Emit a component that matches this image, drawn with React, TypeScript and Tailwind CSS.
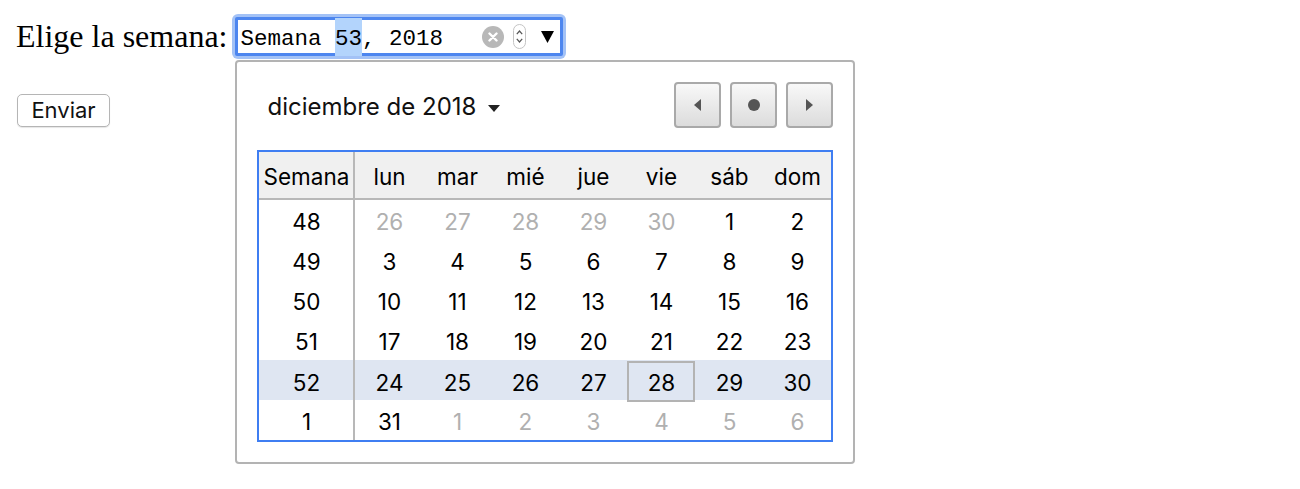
import React from 'react';

type Day = { n: number; muted?: boolean };

const weekDays = ['lun', 'mar', 'mié', 'jue', 'vie', 'sáb', 'dom'];

const rows: { week: number; days: Day[] }[] = [
  { week: 48, days: [26, 27, 28, 29, 30].map((n) => ({ n, muted: true })).concat([{ n: 1 }, { n: 2 }]) },
  { week: 49, days: [3, 4, 5, 6, 7, 8, 9].map((n) => ({ n })) },
  { week: 50, days: [10, 11, 12, 13, 14, 15, 16].map((n) => ({ n })) },
  { week: 51, days: [17, 18, 19, 20, 21, 22, 23].map((n) => ({ n })) },
  { week: 52, days: [24, 25, 26, 27, 28, 29, 30].map((n) => ({ n })) },
  { week: 1, days: [{ n: 31 }].concat([1, 2, 3, 4, 5, 6].map((n) => ({ n, muted: true }))) },
];

const sans = "font-['Inter','Liberation_Sans',sans-serif]";

const NavButton: React.FC<{ children: React.ReactNode }> = ({ children }) => (
  <button className="w-[47px] h-[46px] rounded-[4px] border-2 border-[#a9a9a9] bg-gradient-to-b from-[#f8f8f8] to-[#dcdcdc] flex items-center justify-center">
    {children}
  </button>
);

const WeekPicker: React.FC = () => {
  return (
    <div className={`absolute left-[3px] top-[46px] w-[620px] h-[404px] bg-white border-2 border-[#b3b3b3] rounded-[4px] p-[20px] ${sans}`}>
      {/* Month header */}
      <div className="flex items-center justify-between h-[46px]">
        <div className="flex items-center pl-[10px] pt-[4px] text-[24px] text-[#111]">
          <span>diciembre de 2018</span>
          <svg className="ml-[12px] mt-[2px]" width="12" height="7" viewBox="0 0 12 7">
            <path d="M0 0 L12 0 L6 7 Z" fill="#222" />
          </svg>
        </div>
        <div className="flex gap-[9px]">
          <NavButton>
            <svg width="7" height="12" viewBox="0 0 7 12">
              <path d="M7 0 L7 12 L0 6 Z" fill="#555" />
            </svg>
          </NavButton>
          <NavButton>
            <span className="block w-[12px] h-[12px] rounded-full bg-[#555]" />
          </NavButton>
          <NavButton>
            <svg width="7" height="12" viewBox="0 0 7 12">
              <path d="M0 0 L0 12 L7 6 Z" fill="#555" />
            </svg>
          </NavButton>
        </div>
      </div>

      {/* Calendar grid */}
      <div className="mt-[22px] w-[576px] h-[292px] border-2 border-[#3f7ef2] text-[22.5px]">
        <div className="grid grid-cols-[96px_repeat(7,1fr)] h-[48px] bg-[#f0f0f0] border-b-2 border-[#b8b8b8]">
          <div className="flex items-center justify-center pt-[3px] border-r-2 border-[#b8b8b8]">Semana</div>
          {weekDays.map((d) => (
            <div key={d} className="flex items-center justify-center pt-[3px]">
              {d}
            </div>
          ))}
        </div>
        {rows.map((row) => {
          const current = row.week === 52;
          return (
            <div
              key={row.week}
              className={`grid grid-cols-[96px_repeat(7,1fr)] h-[40px] ${current ? 'bg-[#dfe6f2]' : ''}`}
            >
              <div className="flex items-center justify-center pt-[3px] border-r-2 border-[#b8b8b8] text-black">{row.week}</div>
              {row.days.map((d, i) => {
                const selected = current && d.n === 28;
                return (
                  <div
                    key={i}
                    className={`flex items-center justify-center pt-[3px] ${d.muted ? 'text-[#b0b0b0]' : 'text-black'} ${selected ? 'border-2 border-[#b3b3b3] mt-[1px]' : ''}`}
                  >
                    {d.n}
                  </div>
                );
              })}
            </div>
          );
        })}
      </div>
    </div>
  );
};

export default function App() {
  return (
    <div className="bg-white w-[1300px] h-[489px] pl-[16px] pt-[14px] font-['Liberation_Serif',serif] text-black">
      <div className="flex items-center">
        <label className="text-[32px] leading-[45px] mr-[5px]">Elige la semana:</label>
        <div className="relative">
          <div className="w-[334px] h-[45px] rounded-[6px] bg-[#a3c2f6] p-[3px]">
            <div className="h-full border-[3px] border-[#4d86ef] rounded-[2px] bg-white flex items-center pl-[2px] pr-[6px]">
              <span className="font-['Liberation_Mono',monospace] text-[22.5px] whitespace-pre leading-[33px] pt-[5px]">
                Semana <span className="bg-[#b3d4fc] inline-block -mt-[5px] pt-[5px]">53</span>, 2018
              </span>
              <span className="ml-auto flex items-center">
                <span className="w-[22px] h-[22px] rounded-full bg-[#b8b8b8] flex items-center justify-center">
                  <svg width="10" height="10" viewBox="0 0 10 10">
                    <path d="M1.5 1.5 L8.5 8.5 M8.5 1.5 L1.5 8.5" stroke="#fff" strokeWidth="2.4" strokeLinecap="round" />
                  </svg>
                </span>
                <span className="ml-[9px] w-[13px] h-[25px] rounded-full border border-[#c4c4c4] flex flex-col items-center justify-center gap-[3px]">
                  <svg width="7" height="5" viewBox="0 0 7 5">
                    <path d="M0.8 4.2 L3.5 1 L6.2 4.2" stroke="#555" strokeWidth="1.2" fill="none" />
                  </svg>
                  <svg width="7" height="5" viewBox="0 0 7 5">
                    <path d="M0.8 0.8 L3.5 4 L6.2 0.8" stroke="#555" strokeWidth="1.2" fill="none" />
                  </svg>
                </span>
                <svg className="ml-[15px]" width="13" height="12" viewBox="0 0 13 12">
                  <path d="M0 0 L13 0 L6.5 12 Z" fill="#000" />
                </svg>
              </span>
            </div>
          </div>
          <WeekPicker />
        </div>
      </div>
      <button className={`mt-[35px] ml-[1px] w-[93px] h-[33px] rounded-[5px] border border-[#b5b5b5] bg-white text-[22px] text-[#111] flex items-center justify-center shadow-[0_1px_1px_rgba(0,0,0,0.1)] ${sans}`}>
        Enviar
      </button>
    </div>
  );
}
